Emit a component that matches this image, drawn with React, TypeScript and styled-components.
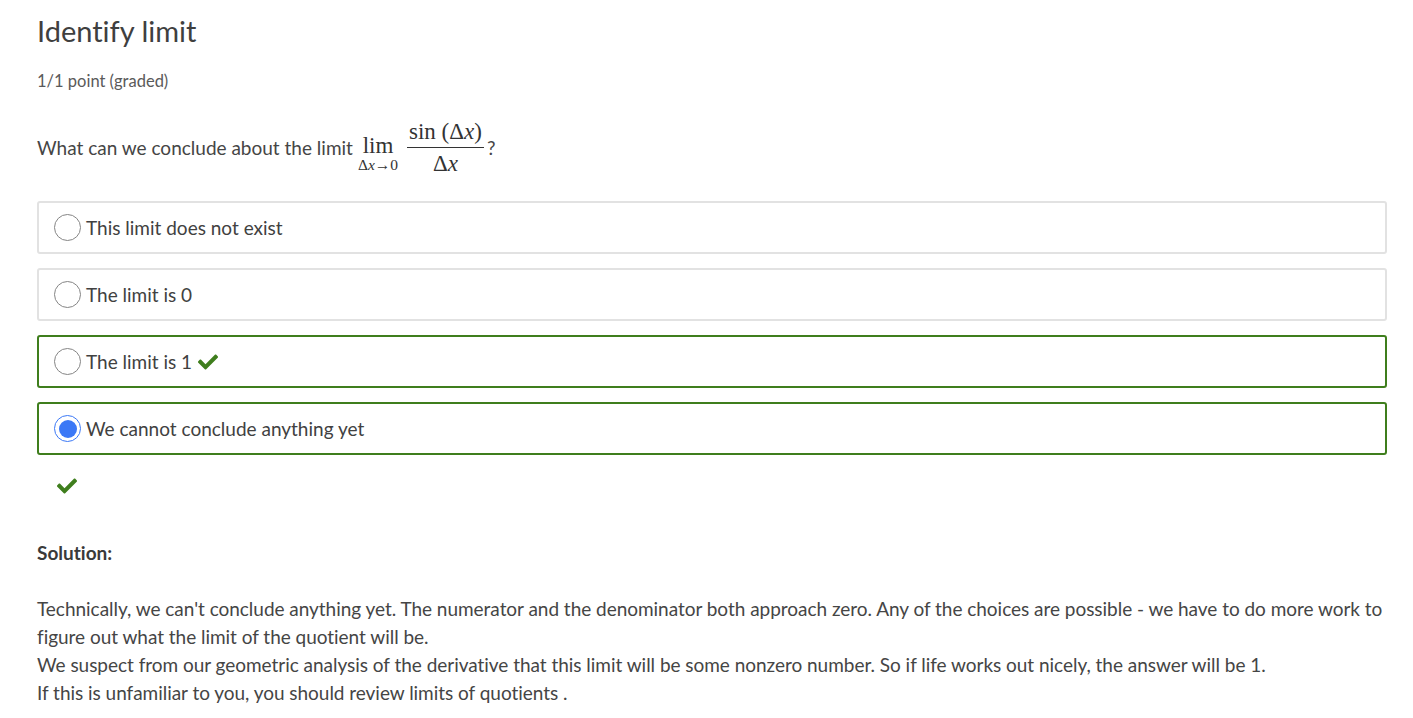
import React from "react";
import styled, { createGlobalStyle } from "styled-components";
import { FaCheck } from "react-icons/fa";

const GlobalStyle = createGlobalStyle`
  body {
    margin: 0;
    background: #fff;
    font-family: "Lato", "Open Sans", sans-serif;
    font-variant-ligatures: none;
    color: #454545;
  }
`;

const Page = styled.div`
  padding: 12px 26px 0 37px;
`;

const Title = styled.h2`
  font-size: 29px;
  font-weight: 400;
  color: #3f3f3f;
  margin: 0;
  line-height: 38px;
`;

const Points = styled.div`
  font-size: 16.5px;
  color: #5a5a5a;
  margin-top: 21px;
  line-height: 20px;
`;

const Question = styled.div`
  display: flex;
  align-items: center;
  font-size: 19px;
  margin-top: 25px;
  height: 62px;
`;

const MathBlock = styled.span`
  display: inline-flex;
  align-items: center;
  font-family: "Liberation Serif", "DejaVu Serif", serif;
  color: #333;
  margin-left: 5px;
`;

const Lim = styled.span`
  display: inline-flex;
  flex-direction: column;
  align-items: center;
  margin-right: 6px;
  padding-top: 14px;
`;

const LimWord = styled.span`
  font-size: 23px;
  line-height: 21px;
`;

const LimSub = styled.span`
  font-size: 15.5px;
  line-height: 17px;
`;

const Frac = styled.span`
  display: inline-flex;
  flex-direction: column;
  align-items: center;
  padding: 0 3px;
`;

const Num = styled.span`
  font-size: 23px;
  line-height: 27px;
  padding: 0 2px 2px;
  border-bottom: 1px solid #333;
`;

const Den = styled.span`
  font-size: 23px;
  line-height: 27px;
  padding-top: 2px;
`;

const Var = styled.i`
  font-style: italic;
`;

const Mark = styled.span`
  font-family: "Lato", sans-serif;
  color: #454545;
  font-size: 19px;
`;

const Choices = styled.div`
  display: flex;
  flex-direction: column;
  gap: 14px;
  margin-top: 23px;
`;

const Choice = styled.label<{ $correct?: boolean }>`
  display: flex;
  align-items: center;
  height: 53px;
  box-sizing: border-box;
  border: 2px solid ${(p) => (p.$correct ? "#3f7e1d" : "#e2e2e2")};
  border-radius: 3px;
  padding-left: 15px;
  font-size: 19px;
  color: #414141;
`;

const Radio = styled.span<{ $checked?: boolean }>`
  width: 27px;
  height: 27px;
  box-sizing: border-box;
  border-radius: 50%;
  border: 1.5px solid ${(p) => (p.$checked ? "#3b78f6" : "#858585")};
  margin-right: 5px;
  display: flex;
  align-items: center;
  justify-content: center;
  flex-shrink: 0;

  &::after {
    content: "";
    display: ${(p) => (p.$checked ? "block" : "none")};
    width: 18px;
    height: 18px;
    border-radius: 50%;
    background: #3b78f6;
  }
`;

const Tick = styled(FaCheck)`
  color: #3f7e1d;
  margin-left: 6px;
  font-size: 20px;
`;

const Status = styled.div`
  padding: 21px 0 0 20px;
  height: 20px;
  color: #3f7e1d;
  font-size: 20px;
`;

const SolutionHead = styled.div`
  font-weight: 700;
  font-size: 19px;
  color: #3a3a3a;
  margin-top: 43px;
  line-height: 28px;
`;

const SolutionText = styled.p`
  font-size: 19px;
  letter-spacing: -0.03px;
  line-height: 28px;
  margin: 28px 0 0;
  color: #454545;
`;

const options = [
  { text: "This limit does not exist" },
  { text: "The limit is 0" },
  { text: "The limit is 1", correct: true, tick: true },
  { text: "We cannot conclude anything yet", correct: true, checked: true },
];

export default function App() {
  return (
    <>
      <GlobalStyle />
      <Page>
        <Title>Identify limit</Title>
        <Points>1/1 point (graded)</Points>
        <Question>
          What can we conclude about the limit
          <MathBlock>
            <Lim>
              <LimWord>lim</LimWord>
              <LimSub>
                Δ<Var>x</Var>→0
              </LimSub>
            </Lim>
            <Frac>
              <Num>
                sin (Δ<Var>x</Var>)
              </Num>
              <Den>
                Δ<Var>x</Var>
              </Den>
            </Frac>
            <Mark>?</Mark>
          </MathBlock>
        </Question>
        <Choices>
          {options.map((o) => (
            <Choice key={o.text} $correct={o.correct}>
              <Radio $checked={o.checked} />
              {o.text}
              {o.tick && <Tick />}
            </Choice>
          ))}
        </Choices>
        <Status>
          <FaCheck />
        </Status>
        <SolutionHead>Solution:</SolutionHead>
        <SolutionText>
          Technically, we can't conclude anything yet. The numerator and the denominator both approach zero. Any of
          the choices are possible - we have to do more work to figure out what the limit of the quotient will be.
          <br />
          We suspect from our geometric analysis of the derivative that this limit will be some nonzero number. So if
          life works out nicely, the answer will be 1.
          <br />
          If this is unfamiliar to you, you should review limits of quotients .
        </SolutionText>
      </Page>
    </>
  );
}
